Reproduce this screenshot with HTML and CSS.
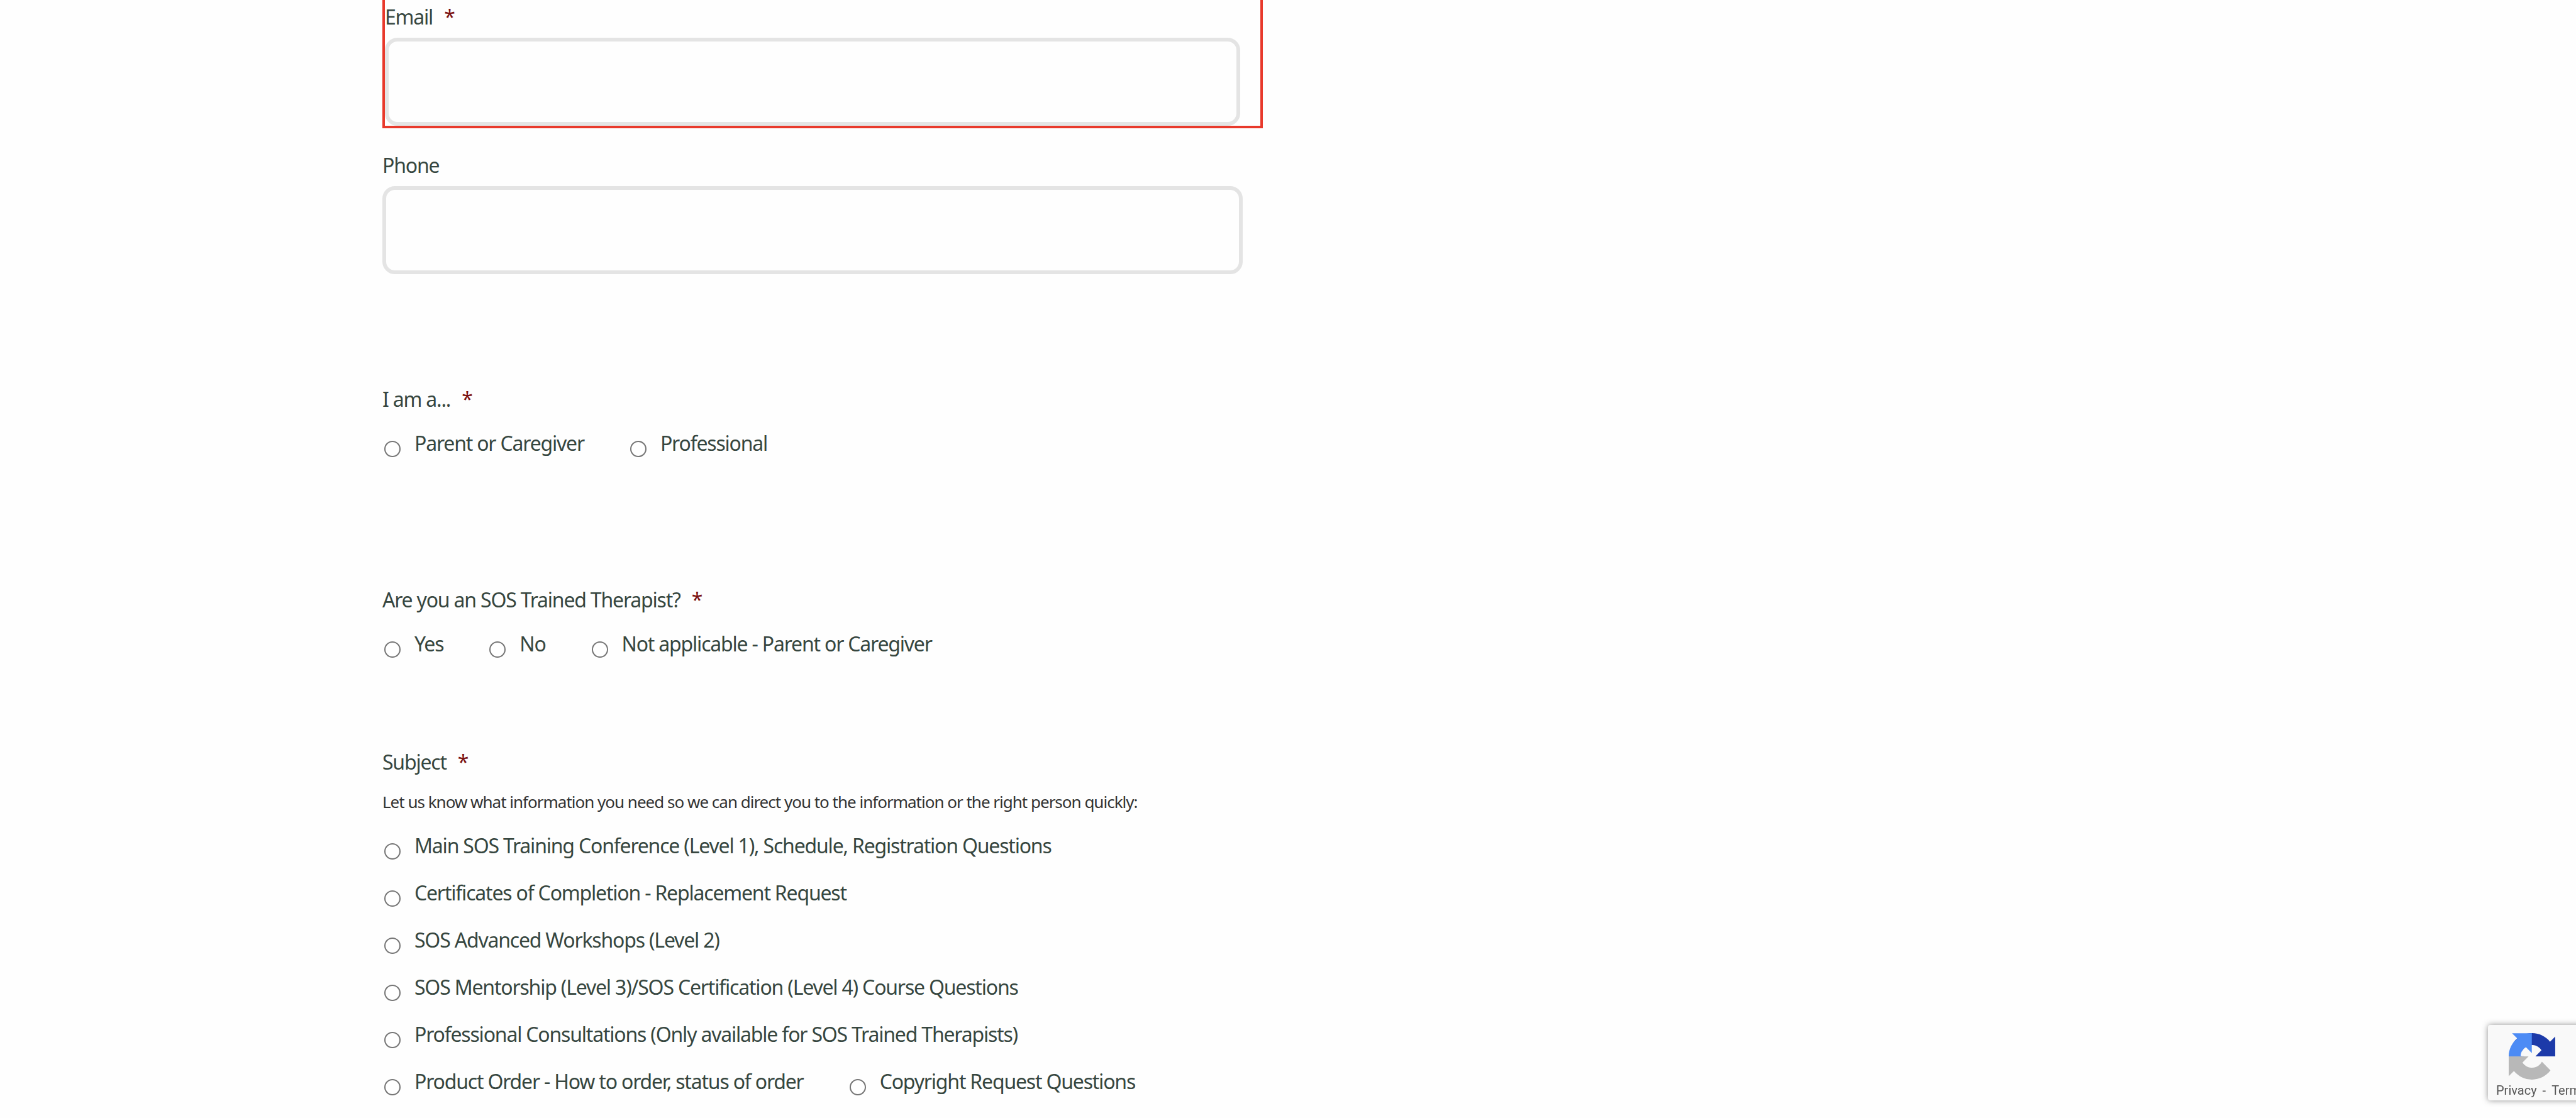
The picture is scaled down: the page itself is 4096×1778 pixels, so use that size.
FILE: index.html
```html
<!DOCTYPE html>
<html lang="en">
<head>
<meta charset="utf-8">
<title>Contact form</title>
<link rel="stylesheet" href="styles.css">
</head>
<body>
<form class="form">
  <div class="field field-error">
    <label class="label">Email<span class="req">*</span></label>
    <input class="text-input text-input-error" type="text">
  </div>
  <div class="field field-phone">
    <label class="label">Phone</label>
    <input class="text-input" type="text">
  </div>
  <div class="field field-role">
    <div class="label">I am a...<span class="req">*</span></div>
    <div class="options">
      <label class="option"><input class="radio" type="radio" name="role"><span>Parent or Caregiver</span></label>
      <label class="option"><input class="radio" type="radio" name="role"><span>Professional</span></label>
    </div>
  </div>
  <div class="field field-trained">
    <div class="label">Are you an SOS Trained Therapist?<span class="req">*</span></div>
    <div class="options">
      <label class="option"><input class="radio" type="radio" name="trained"><span>Yes</span></label>
      <label class="option"><input class="radio" type="radio" name="trained"><span>No</span></label>
      <label class="option"><input class="radio" type="radio" name="trained"><span>Not applicable - Parent or Caregiver</span></label>
    </div>
  </div>
  <div class="field field-subject">
    <div class="label">Subject<span class="req">*</span></div>
    <p class="help">Let us know what information you need so we can direct you to the information or the right person quickly:</p>
    <div class="options options-stack">
      <label class="option"><input class="radio" type="radio" name="subject"><span>Main SOS Training Conference (Level 1), Schedule, Registration Questions</span></label>
      <label class="option"><input class="radio" type="radio" name="subject"><span>Certificates of Completion - Replacement Request</span></label>
      <label class="option"><input class="radio" type="radio" name="subject"><span>SOS Advanced Workshops (Level 2)</span></label>
      <label class="option"><input class="radio" type="radio" name="subject"><span>SOS Mentorship (Level 3)/SOS Certification (Level 4) Course Questions</span></label>
      <label class="option"><input class="radio" type="radio" name="subject"><span>Professional Consultations (Only available for SOS Trained Therapists)</span></label>
      <div class="options">
        <label class="option"><input class="radio" type="radio" name="subject"><span>Product Order - How to order, status of order</span></label>
        <label class="option"><input class="radio" type="radio" name="subject"><span>Copyright Request Questions</span></label>
      </div>
    </div>
  </div>
</form>
<aside class="recaptcha">
  <svg class="recaptcha-logo" viewBox="0 0 64 64" width="74" height="74" aria-hidden="true">
    <path d="M64 31.955l-.033-1.37V4.687l-7.16 7.16C50.948 4.674 42.033.093 32.05.093c-10.4 0-19.622 4.96-25.458 12.64l11.736 11.86a15.55 15.55 0 0 1 4.754-5.334c2.05-1.6 4.952-2.906 8.968-2.906.485 0 .86.057 1.135.163 4.976.393 9.288 3.14 11.828 7.124l-8.307 8.307c10.522-.04 22.4-.066 27.295.005" fill="#1c3aa9"/>
    <path d="M31.862.094l-1.37.033H4.594l7.16 7.16C4.58 13.147 0 22.06 0 32.046c0 .05 0 .05 0 0h24.4c-.04-.2-7.9-.2-8-1 .393-4.976 3.14-9.288 7.124-11.828l8.307 8.307c-.04-10.522-.066-22.4.005-27.295" fill="#4c8bf5"/>
    <path d="M.001 32.045l.033 1.37v25.898l7.16-7.16c5.86 7.173 14.774 11.754 24.76 11.754 10.4 0 19.622-4.96 25.458-12.64l-11.736-11.86a15.55 15.55 0 0 1-4.754 5.334c-2.05 1.6-4.952 2.906-8.968 2.906-.485 0-.86-.057-1.135-.163-4.976-.393-9.288-3.14-11.828-7.124l8.307-8.307c-10.522.04-22.4.066-27.295-.005" fill="#b8b8b8"/>
  </svg>
  <div class="recaptcha-links">Privacy<span class="recaptcha-sep">-</span>Terms</div>
</aside>
</body>
</html>
```
FILE: styles.css
```css
html, body {
  margin: 0;
  padding: 0;
  background: #fefefe;
  overflow: hidden;
  height: 1778px;
}

body {
  font-family: "Noto Sans", "Open Sans", sans-serif;
  color: #36463f;
}

.form {
  margin-left: 608px;
  width: 1400px;
}

.label {
  display: block;
  font-size: 32px;
  line-height: 54px;
  letter-spacing: -1.2px;
  margin-bottom: 16px;
}

.req {
  color: #7a0f0f;
  margin-left: 18px;
}

.field-error {
  box-sizing: border-box;
  height: 204px;
  border: 4px solid #e8392b;
  border-top: 0;
}

.field-error .label,
.field-phone .label {
  margin-bottom: 6px;
}

.text-input {
  display: block;
  box-sizing: border-box;
  width: 1368px;
  height: 140px;
  border: 6px solid #e4e4e4;
  border-radius: 20px;
  background: #fefefe;
  outline: none;
  padding: 0 20px;
}

.text-input-error {
  width: 1360px;
}

.field-phone {
  margin-top: 32px;
}

.field-role {
  margin-top: 172px;
}

.field-trained {
  margin-top: 195px;
}

.field-subject {
  margin-top: 134px;
}

.help {
  margin: 14px 0 23px;
  font-size: 26px;
  line-height: 40px;
  letter-spacing: -1px;
  color: #333;
}

.options {
  display: flex;
  gap: 70px;
}

.options-stack {
  flex-direction: column;
  gap: 21px;
}

.option {
  display: flex;
  align-items: flex-start;
  font-size: 32px;
  line-height: 54px;
  letter-spacing: -1.2px;
}

.radio {
  appearance: none;
  box-sizing: border-box;
  width: 26px;
  height: 26px;
  margin: 23px 22px 0 3px;
  border: 2.5px solid #767676;
  border-radius: 50%;
  background: #fff;
  flex: none;
}

.recaptcha {
  position: fixed;
  left: 3956px;
  top: 1630px;
  width: 256px;
  height: 120px;
  box-sizing: border-box;
  background: #f9f9f9;
  border-radius: 4px 0 0 4px;
  box-shadow: 0 0 10px rgba(128, 128, 128, 0.85);
  padding: 13px 0 0 13px;
}

.recaptcha-logo {
  display: block;
  margin-left: 20px;
}

.recaptcha-links {
  font-family: Roboto, "Liberation Sans", sans-serif;
  font-size: 20px;
  line-height: 24px;
  margin-top: 5px;
  color: #555;
}

.recaptcha-sep {
  margin: 0 9px;
}
```
